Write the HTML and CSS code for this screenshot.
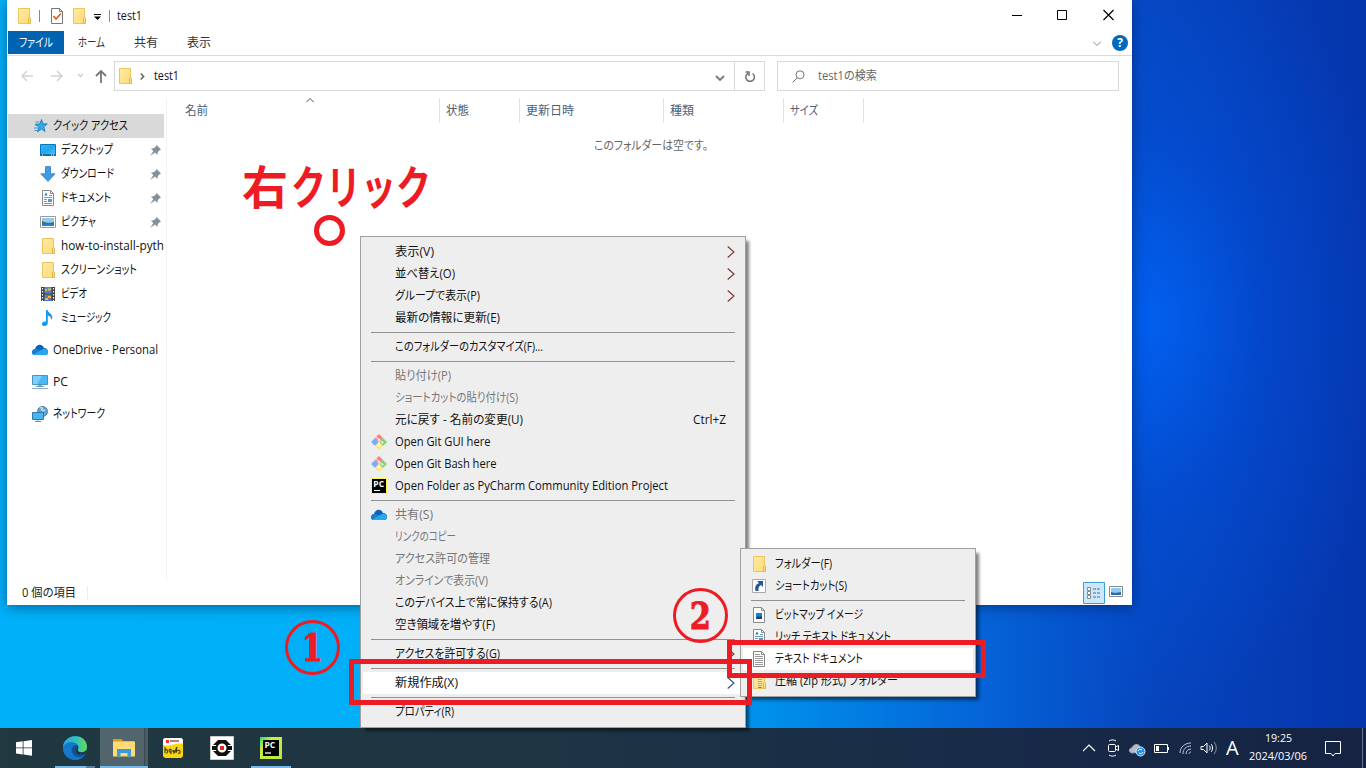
FILE: index.html
```html
<!DOCTYPE html>
<html lang="ja">
<head>
<meta charset="utf-8">
<title>test1</title>
<link rel="stylesheet" href="styles.css">
</head>
<body>
<svg class="defs" aria-hidden="true">
  <defs>
    <linearGradient id="gf" x1="0" y1="0" x2="1" y2="1"><stop offset="0" stop-color="#ffe9a2"/><stop offset="1" stop-color="#ffdc7c"/></linearGradient>
    <linearGradient id="gb" x1="0" y1="0" x2="1" y2="1"><stop offset="0" stop-color="#35b4f5"/><stop offset=".5" stop-color="#25a5ee"/><stop offset="1" stop-color="#55c4ff"/></linearGradient>
    <linearGradient id="ge" x1="0" y1="0" x2="1" y2="0"><stop offset="0" stop-color="#2aa5e0"/><stop offset=".6" stop-color="#32c6b4"/><stop offset="1" stop-color="#66dc4c"/></linearGradient>
    <linearGradient id="gd" x1="0" y1="0" x2="0" y2="1"><stop offset="0" stop-color="#1687d9"/><stop offset="1" stop-color="#0b58a8"/></linearGradient>
    <linearGradient id="gp" x1="0" y1="0" x2="1" y2="1"><stop offset="0" stop-color="#21d789"/><stop offset=".3" stop-color="#c8f03c"/><stop offset="1" stop-color="#b5ea42"/></linearGradient>
    <symbol id="folder" viewBox="0 0 16 16"><path d="M2.500.5h11v15h-11z" fill="url(#gf)" stroke="#eac65c"/><path d="M12.500 15.500v-5.200l1-1 1 1v5.200z" fill="#ffe08a" stroke="#e0b645"/></symbol>
    <symbol id="star" viewBox="0 0 16 16"><path d="M9.500 1.500l1.500 4.300 4.300.1-3.500 2.900 1.200 4.700-3.500-2.400-4 2.700 1.400-4.500L3.500 6.200l4.500-.3z" fill="#34a8ea" stroke="#1379bd" stroke-width=".8"/><path d="M3.500 4h4M2.500 7h3M2 10h4M2.500 12.500h3" stroke="#1f8dd0" stroke-width=".8"/></symbol>
    <symbol id="desktop" viewBox="0 0 16 16"><path d="M.5 2.500h15v11H.500z" fill="url(#gb)" stroke="#0878bc"/><path d="M0 13h16" stroke="#0b67a4" stroke-width="1.500"/><path d="M11 13h1M13 13h1M2 13h1" stroke="#fff"/></symbol>
    <symbol id="down" viewBox="0 0 16 16"><path d="M5.500.5h5v7.300h4.500L8 15.500.8 7.800h4.700z" fill="#419be2" stroke="#2f80c8" stroke-width=".8"/></symbol>
    <symbol id="doc" viewBox="0 0 16 16"><path d="M2.500.5h8l3 3v12h-11z" fill="#fff" stroke="#8a8a8a"/><path d="M10.500.5v3h3" fill="none" stroke="#8a8a8a"/><path d="M4 7.500h8M4 9.500h3M4 11.500h3M4 13.500h8M9 5.500h3" stroke="#6c9cbd"/><path d="M4.300 5.500L6 2.500l1.500 3z" fill="#2676b1"/><path d="M8 9h4v3H8z" fill="#4b9bd0"/></symbol>
    <symbol id="picture" viewBox="0 0 16 16"><path d="M.500 2.500h15v11H.500z" fill="#fff" stroke="#999"/><path d="M2 4h12v8H2z" fill="#8ecaf5"/><path d="M2 7l4 1.500L9 9l5-1v2H2z" fill="#44705d"/><path d="M2 10h12v2H2z" fill="#327dbb"/></symbol>
    <symbol id="video" viewBox="0 0 16 16"><path d="M1 1h14v14H1z" fill="#404040"/><path d="M4.500 1h7v6.500h-7z" fill="#5588ce"/><path d="M4.500 8.500h7V15h-7z" fill="#4d80d0"/><path d="M8 3.500h3M5 4h2M8 11h3M5 13h3" stroke="#e8bd36" stroke-width="2"/><path d="M7 5.500h3M8 12.500h2" stroke="#c94c35"/><path d="M2.500 2v13M13.500 2v13" stroke="#fff" stroke-width="1.200" stroke-dasharray="1.500 1.500"/></symbol>
    <symbol id="music" viewBox="0 0 16 16"><path d="M6 0h1.600c.2 3 5 3.500 4.700 7.500-.1 1.300-.7 2-1.400 2.500.8-2.500-1-4-3.100-4.500V13c0 4-6.400 3.800-5.800.5C2.400 11.800 4.500 11 6 11.600z" fill="#119af0"/></symbol>
    <symbol id="cloud" viewBox="0 0 16 16"><path d="M3 7C4 2 10 .800 12 6c3 0 4 2 4 4 0 2-1 3-3 3H3C1 13 0 12 0 10.500S1 7 3 7z" fill="#0a63b7"/><path d="M3 7c2-.3 4 .4 5 1.500L1 12.500C-.8 11 0 7.500 3 7z" fill="#1580d3"/><path d="M1.200 12.500L8 8.500l4-2c2.500 0 4 1.500 4 3.500 0 2-1 3-3 3H3z" fill="#28a8ea"/></symbol>
    <symbol id="pc" viewBox="0 0 16 16"><path d="M.500 1.500h15v9H.500z" fill="#4ab9fa" stroke="#4f92ba"/><path d="M1 2h9L5 10H1z" fill="#7bd0ff"/><path d="M6 11h4v1.500H6zM4 12h8v1H4z" fill="#6baacb"/><path d="M0 14h16v1H0z" fill="#8eabc0"/></symbol>
    <symbol id="network" viewBox="0 0 16 16"><circle cx="10.500" cy="5.500" r="5" fill="#62a4cf" stroke="#4b86ad"/><path d="M8 2c2-1 3 0 2 1s1 2 3 1" fill="none" stroke="#bddaea" stroke-width="1.500"/><path d="M.500 6.500h11v7H.500z" fill="#47b5f4" stroke="#3179a8"/><path d="M6 14v1M3 15.500h6" stroke="#7296aa"/></symbol>
    <symbol id="pin" viewBox="0 0 10 10"><path d="M6 0l4 4-1.400.700L7 6.500 6.800 9 4.500 6.900.2 9.900 3.100 5.500.8 3.200l2.500-.2L5.200 1.500z" fill="#849099"/></symbol>
    <symbol id="git" viewBox="0 0 16 16"><path d="M8 0l4 4-4 4-4-4z" fill="#ff7d7d"/><path d="M4 4l4 4-4 4-4-4z" fill="#7aaefb"/><path d="M12 4l4 4-4 4-4-4z" fill="#82d36d"/><path d="M8 8l4 4-4 4-4-4z" fill="#ffe681"/><path d="M5 3l7 6M8 5v7" stroke="#f2f2f2"/><circle cx="8" cy="5.500" r="1" fill="#fff"/><circle cx="11.500" cy="8.500" r="1" fill="#fff"/><circle cx="8" cy="11.500" r="1" fill="#fff"/></symbol>
    <symbol id="pycharm" viewBox="0 0 16 16"><path d="M.500.500h15v15H.500z" stroke="#fcf84a"/><text x="2.300" y="8.800" fill="#fff" font-family="Open Sans" font-size="8.500" font-weight="700">PC</text><path d="M3 12.500h6" stroke="#fff"/></symbol>
    <symbol id="shortcut" viewBox="0 0 16 16"><path d="M1.500 1.500h13v13h-13z" fill="#fff" stroke="#aaa"/><path d="M6 3h6v6l-2-2c-2 1-3 3-2.500 6h-3C3.800 10 4 6.500 8 5z" fill="#2a5795"/></symbol>
    <symbol id="bitmap" viewBox="0 0 16 16"><path d="M2.500.5h8l3 3v12h-11z" fill="#fff" stroke="#8a8a8a"/><path d="M10.500.5v3h3" fill="none" stroke="#8a8a8a"/><path d="M5 6h6v6H5z" fill="#1684d6"/><path d="M5 11l2-2 1.500 1L10 9l1 1v2H5z" fill="#1e3f6d"/></symbol>
    <symbol id="text" viewBox="0 0 16 16"><path d="M2.500.5h8l3 3v12h-11z" fill="#fff" stroke="#858585"/><path d="M10.500.5v3h3" fill="none" stroke="#858585"/><path d="M4 3.500h5M4 5.500h8M4 7.500h8M4 9.500h8M4 11.500h8M4 13.500h8" stroke="#999"/></symbol>
    <symbol id="zip" viewBox="0 0 16 16"><use href="#folder"/><path d="M9 0v16" stroke="#686868" stroke-width="3" stroke-dasharray="1 1"/><path d="M9 6v8" stroke="#e7e7e7"/></symbol>
    <symbol id="chev" viewBox="0 0 8 12"><path d="M.7.5L7 6 .7 11.500" fill="none" stroke="currentColor" stroke-width="1.100"/></symbol>
  </defs>
</svg>

<main class="desktop">
  <section class="window">
    <header class="titlebar">
      <svg class="i16"><use href="#folder"/></svg><i class="tick"></i>
      <svg class="i16 check" viewBox="0 0 16 16"><path d="M2.500.5h8l3 3v12h-11z" fill="#fff" stroke="#777"/><path d="M10.500.5v3h3" fill="none" stroke="#777"/><path d="M4.500 8l2.500 3 5-5.500" fill="none" stroke="#e85a25" stroke-width="1.700"/></svg>
      <svg class="i16 second"><use href="#folder"/></svg>
      <svg class="more" viewBox="0 0 7 6"><path d="M0 .5h7" stroke="#000"/><path d="M0 2.500h7L3.500 6z"/></svg><i class="tick"></i>
      <span class="title" data-w="25">test1</span>
      <svg class="controls" viewBox="0 0 102 12"><path d="M0 6.500h10M45.500 1.500h9v9h-9z" fill="none" stroke="#000"/><path d="M91.500 1l10 10M101.500 1l-10 10" fill="none" stroke="#000" stroke-width="1.200"/></svg>
    </header>
    <nav class="ribbon">
      <span class="file"><b data-w="34">ファイル</b></span><span class="tab t1" data-w="27">ホーム</span><span class="tab t2" data-w="24">共有</span><span class="tab t3" data-w="24">表示</span>
      <svg class="rchev" viewBox="0 0 8 5"><path d="M0 .5l4 4 4-4" fill="none" stroke="#888"/></svg>
      <span class="help">?</span>
    </nav>
    <div class="address">
      <svg class="arrows" viewBox="0 0 90 16"><path d="M12 8H1m5-5L1 8l5 5M30 8h11m-5-5l5 5-5 5" fill="none" stroke="#d2d2d2" stroke-width="1.500"/><path d="M57 6l2.500 2.500L62 6" fill="none" stroke="#ccc" stroke-width="1.300"/><path d="M80 15V3m-5 5l5-5 5 5" fill="none" stroke="#777" stroke-width="1.800"/></svg>
      <div class="path"><svg class="i16"><use href="#folder"/></svg><svg class="crumb" viewBox="0 0 5 7"><path d="M.7.5l3 3-3 3" fill="none" stroke="#666" stroke-width="1.500"/></svg><span data-w="25">test1</span>
        <svg class="drop" viewBox="0 0 10 6"><path d="M1 1l4 4 4-4" fill="none" stroke="#777" stroke-width="1.800"/></svg>
        <span class="refresh"><svg viewBox="0 0 12 12"><path d="M8.500 2.500A4.300 4.300 0 1 1 4 2.300M1.500 1H5v4" fill="none" stroke="#707070" stroke-width="1.500"/></svg></span></div>
      <div class="search"><svg viewBox="0 0 13 13"><circle cx="8" cy="4.800" r="4" fill="none" stroke="#777"/><path d="M5 8L.5 12.500" stroke="#777"/></svg><span data-w="59">test1の検索</span></div>
    </div>
    <div class="body">
      <aside class="side">
        <div class="nav top sel"><svg class="i16"><use href="#star"/></svg><span data-w="75">クイック アクセス</span></div>
        <div class="nav"><svg class="i16"><use href="#desktop"/></svg><span data-w="52">デスクトップ</span><svg class="pin"><use href="#pin"/></svg></div>
        <div class="nav"><svg class="i16"><use href="#down"/></svg><span data-w="53">ダウンロード</span><svg class="pin"><use href="#pin"/></svg></div>
        <div class="nav"><svg class="i16"><use href="#doc"/></svg><span data-w="50">ドキュメント</span><svg class="pin"><use href="#pin"/></svg></div>
        <div class="nav"><svg class="i16"><use href="#picture"/></svg><span data-w="35">ピクチャ</span><svg class="pin"><use href="#pin"/></svg></div>
        <div class="nav"><svg class="i16"><use href="#folder"/></svg><span data-w="103">how-to-install-pyth</span></div>
        <div class="nav"><svg class="i16"><use href="#folder"/></svg><span data-w="76">スクリーンショット</span></div>
        <div class="nav"><svg class="i16"><use href="#video"/></svg><span data-w="26">ビデオ</span></div>
        <div class="nav"><svg class="i16"><use href="#music"/></svg><span data-w="50">ミュージック</span></div>
        <div class="nav top gap"><svg class="i16"><use href="#cloud"/></svg><span data-w="105">OneDrive - Personal</span></div>
        <div class="nav top gap"><svg class="i16"><use href="#pc"/></svg><span data-w="15">PC</span></div>
        <div class="nav top gap"><svg class="i16"><use href="#network"/></svg><span data-w="52">ネットワーク</span></div>
      </aside>
      <section class="files">
        <svg class="sort" viewBox="0 0 8 5"><path d="M0 4.500l4-4 4 4" fill="none" stroke="#555"/></svg>
        <div class="cols"><div><span data-w="23">名前</span></div><div><span data-w="23">状態</span></div><div><span data-w="48">更新日時</span></div><div><span data-w="24">種類</span></div><div><span data-w="28">サイズ</span></div></div>
        <p class="empty"><span data-w="114">このフォルダーは空です。</span></p>
      </section>
    </div>
    <footer class="status"><span data-w="54">0 個の項目</span><i></i>
      <svg class="views" viewBox="0 0 43 22"><path d="M.500.500h21v21H.500z" fill="#cbe8fb" stroke="#3a9fca"/><path d="M4.500 5.500h3v3h-3zM4.500 9.500h3v3h-3zM4.500 13.500h3v3h-3z" fill="#fff" stroke="#7f8c94"/><path d="M10 7h3m1 0h3M10 11h3m1 0h3M10 15h3m1 0h3" stroke="#536e80"/><path d="M26.500 4.500h13v10h-13z" fill="#fff" stroke="#888"/><path d="M28 6h10v7H28z" fill="#8fcaf5"/><path d="M28 10l4 1 6-1v3H28z" fill="#2d699e"/></svg>
    </footer>
  </section>

  <div class="redtext"><span data-w="46">右</span><span data-w="140">クリック</span></div>
  <div class="ring"></div>

  <section class="menu main">
    <div class="item"><span data-w="39">表示(V)</span><svg class="sub"><use href="#chev"/></svg></div>
    <div class="item"><span data-w="60">並べ替え(O)</span><svg class="sub"><use href="#chev"/></svg></div>
    <div class="item"><span data-w="85">グループで表示(P)</span><svg class="sub"><use href="#chev"/></svg></div>
    <div class="item"><span data-w="105">最新の情報に更新(E)</span></div>
    <hr>
    <div class="item"><span data-w="148">このフォルダーのカスタマイズ(F)...</span></div>
    <hr>
    <div class="item off"><span data-w="56">貼り付け(P)</span></div>
    <div class="item off"><span data-w="123">ショートカットの貼り付け(S)</span></div>
    <div class="item"><span data-w="128">元に戻す - 名前の変更(U)</span><span class="key" data-w="33">Ctrl+Z</span></div>
    <div class="item"><svg class="i16"><use href="#git"/></svg><span data-w="95.500">Open Git GUI here</span></div>
    <div class="item"><svg class="i16"><use href="#git"/></svg><span data-w="101.500">Open Git Bash here</span></div>
    <div class="item"><svg class="i16"><use href="#pycharm"/></svg><span data-w="273">Open Folder as PyCharm Community Edition Project</span></div>
    <hr>
    <div class="item off"><svg class="i16"><use href="#cloud"/></svg><span data-w="38">共有(S)</span></div>
    <div class="item off"><span data-w="61">リンクのコピー</span></div>
    <div class="item off"><span data-w="95">アクセス許可の管理</span></div>
    <div class="item off"><span data-w="93">オンラインで表示(V)</span></div>
    <div class="item"><span data-w="157">このデバイス上で常に保持する(A)</span></div>
    <div class="item"><span data-w="100">空き領域を増やす(F)</span></div>
    <hr>
    <div class="item"><span data-w="105">アクセスを許可する(G)</span><svg class="sub"><use href="#chev"/></svg></div>
    <hr>
    <div class="item hot"><span data-w="63">新規作成(X)</span><svg class="sub blue"><use href="#chev"/></svg></div>
    <hr>
    <div class="item"><span data-w="59">プロパティ(R)</span></div>
  </section>

  <section class="menu child">
    <div class="item"><svg class="i16"><use href="#folder"/></svg><span data-w="57">フォルダー(F)</span></div>
    <div class="item"><svg class="i16"><use href="#shortcut"/></svg><span data-w="72">ショートカット(S)</span></div>
    <hr>
    <div class="item"><svg class="i16"><use href="#bitmap"/></svg><span data-w="88">ビットマップ イメージ</span></div>
    <div class="item"><svg class="i16"><use href="#doc"/></svg><span data-w="116">リッチ テキスト ドキュメント</span></div>
    <div class="item hot"><svg class="i16"><use href="#text"/></svg><span data-w="88">テキスト ドキュメント</span></div>
    <div class="item"><svg class="i16"><use href="#zip"/></svg><span data-w="123">圧縮 (zip 形式) フォルダー</span></div>
  </section>

  <div class="box one"></div><div class="box two"></div>
  <div class="num n1"><span>1</span></div><div class="num n2"><span>2</span></div>

  <footer class="taskbar">
    <div class="app start"><svg width="16" height="16" viewBox="0 0 16 16"><path d="M0 2.200l6.700-.9v6.200H0zM7.500 1.200L16 0v7.500H7.500zM0 8.300h6.700v6.200L0 13.600zM7.500 8.300H16v7.500l-8.500-1.200z" fill="#fff"/></svg></div>
    <div class="app edge"><svg width="24" height="24" viewBox="0 0 24 24"><circle cx="12" cy="12" r="12" fill="url(#gd)"/><path d="M0 11C1-2 22-4 24 10c.3 5-4 7-7.500 6-3-1-1-2.500-1-5 0-5-10-7-15.500 0z" fill="url(#ge)"/><path d="M0 12C2 5 11 5 13 9c-4 0-6 4-4 8 2 5 8 5 12 3-7 8-21 3-21-8z" fill="#1678cb"/><path d="M14 9c-5 0-6 5-4 8 2.500 4.500 8 4.500 12 1l.5-1C19 18 14 17 15 13z" fill="#164e8d"/><path d="M14.500 9.500c2 2-.5 4 .5 5.500 2 2.500 7 1.500 8.500-1l-1 3.500c-4 2-9 1-9.500-2z" fill="#20343e"/></svg></div>
    <div class="app explorer"><svg width="22" height="20" viewBox="0 0 22 20"><path d="M0 1h8l2 2h11.500v15H0z" fill="#f4b63c"/><path d="M0 4h22v14.500H0z" fill="#ffda75"/><path d="M0 1h8l1.500 2H0z" fill="#e09a13"/><path d="M4 11h14v7.500h-3.500V15h-7v3.500H4z" fill="#379be0"/></svg></div>
    <div class="app lego"><svg width="20" height="20" viewBox="0 0 20 20"><rect width="20" height="20" rx="3" fill="#fbd514"/><path d="M0 7V3a3 3 0 0 1 3-3h14a3 3 0 0 1 3 3v3C14 4 6 9 0 7z" fill="#fff"/><path d="M3 2h3v3H3z" fill="#e33"/><path d="M7 3h9" stroke="#ad4b4b" stroke-width="1.500"/><path d="M2 9v6m0-2c2-5 4 3 1 2m5-4c-3 0-2 4 0 3v-3 5m2-4l1 3 3-6-1 6m1-2c4-3 4 4 1 2m-6-2h5" fill="none" stroke="#443b13" stroke-width="1.100"/></svg></div>
    <div class="app ev3"><svg width="24" height="24" viewBox="0 0 24 24"><path d="M.500.500h23v23H.500z" fill="#fff" stroke="#ccc"/><path d="M8 4h8l5 5H3zM3 15h18l-5 5H8zM2 10h4v4H2zM18 10h4v4h-4z" fill="#111"/><circle cx="12" cy="12" r="5.500" fill="#fff" stroke="#111" stroke-width="2"/><path d="M10 10h4v4h-4z" fill="#ec2525"/></svg></div>
    <div class="app pyc"><svg width="22" height="22" viewBox="0 0 22 22"><path d="M0 0h22v22H0z" fill="url(#gp)"/><path d="M3 3h16v16H3z"/><text x="4.500" y="11" fill="#fff" font-family="Open Sans" font-size="8.500" font-weight="700">PC</text><path d="M5 16h6" stroke="#fff" stroke-width="1.300"/></svg></div>
    <div class="tray">
      <svg width="130" height="24" viewBox="0 0 130 24" fill="none" stroke="#fff"><path d="M0 15l6-6 6 6" stroke-width="1.200"/>
        <rect x="25.500" y="8.500" width="7" height="7" rx="1"/><path d="M32.500 11l3-1.500v5l-3-1.500M26 5c2-1.500 5-1.500 7 0M26 19c2 1.500 5 1.500 7 0"/>
        <path d="M49 17c-4-1-3-5 0-5 1-4 7-5 8-1 3 0 4 3 2 5z" fill="#b7bbc4" stroke="#9da5b0"/><circle cx="57.500" cy="15.500" r="4.500" fill="#218be1" stroke="#d7efff"/><path d="M55 15a2.500 2.500 0 0 1 4-1m1 2a2.500 2.500 0 0 1-4 1"/>
        <path d="M71.500 8.500h13v8h-13zM85.500 11v3"/><path d="M73 10h3v5h-3z" fill="#fff" stroke="none"/>
        <path d="M97 17C97 11 102 7 108 7M100 18c0-5 3-8 8-8M103 18c0-3 2-5 5-5M106 18c0-1 1-2 2-2" stroke="#bfc6d4"/>
        <path d="M118 10.500h2.500L124 7v10l-3.500-3.500H118zM126 9.500c1.500 1 1.500 4 0 5"/></svg>
      <svg class="waves" width="8" height="14" viewBox="0 0 8 14" fill="none" stroke="#fff"><path d="M0 3c2 2 2 6 0 8"/><path d="M3 1c3 3 3 9 0 12" stroke="#8b93a2"/></svg>
      <span class="ime">A</span>
      <div class="clock"><span data-w="27">19:25</span><span data-w="58">2024/03/06</span></div>
      <svg class="note" width="16" height="16" viewBox="0 0 16 16"><path d="M.500.500h15v12H10L8 15l-2-2.500H.500z" fill="none" stroke="#fff"/></svg>
      <i class="peek"></i>
    </div>
  </footer>
</main>
<script src="fit.js"></script>
</body>
</html>
```
FILE: styles.css
```css
* { box-sizing: border-box; }
body { margin: 0; width: 1366px; height: 768px; overflow: hidden; font: 12px/16px "Open Sans", "Noto Sans CJK JP", sans-serif; font-feature-settings: "palt"; color: #111; }
.defs { position: absolute; width: 0; height: 0; }
svg { display: block; flex: none; }
.i16 { width: 16px; height: 16px; }
[data-w] { display: inline-block; white-space: nowrap; transform-origin: 0 50%; flex: none; }
.desktop { position: relative; width: 1366px; height: 768px; display: flex; flex-direction: column; justify-content: space-between;
  background: radial-gradient(ellipse 250px 400px at 1150px 320px, rgba(0,104,255,.75), rgba(0,90,240,.35) 45%, rgba(0,70,220,0) 100%),
    linear-gradient(90deg, #00b1f9 0, #00aff8 380px, #0091ec 760px, #0564d8 980px, #0645bd 1150px, #0535ad 1366px); }

.window { width: 1125px; height: 605px; margin-left: 7px; background: #fff; display: flex; flex-direction: column; box-shadow: 0 2px 12px rgba(0,20,60,.5); }
.titlebar { height: 31px; display: flex; align-items: center; padding-left: 9px; }
.tick { width: 1px; height: 12px; background: #888; margin-left: 7px; }
.titlebar .i16 { margin-top: 1px; }
.check { margin-left: 9px; }
.second { margin-left: 6px; }
.more { width: 7px; height: 6px; margin: 3px 0 0 7px; }
.more + .tick { margin-left: 8px; }
.title { margin-left: 7px; margin-top: 1px; }
.controls { width: 102px; height: 12px; margin-left: auto; margin-right: 18px; margin-top: -1px; }
.ribbon { height: 25px; border-bottom: 1px solid #dadbdc; display: flex; align-items: flex-start; padding-left: 1px; color: #333; }
.file { background: #0063b1; color: #fff; width: 56px; height: 23px; padding: 4px 0 0 11px; }
.file b { font-weight: 400; }
.tab { margin-top: 4px; }
.t1 { margin-left: 14px; }
.t2 { margin-left: 29px; }
.t3 { margin-left: 29px; }
.rchev { width: 8px; height: 5px; margin: 10px 11px 0 auto; }
.help { width: 16px; height: 16px; margin: 4px 4px 0 0; border-radius: 50%; background: #0068be; color: #fff; font-weight: 700; text-align: center; line-height: 16px; }
.address { height: 40px; padding-top: 5px; display: flex; }
.arrows { width: 90px; height: 16px; margin: 7px 3px 0 14px; }
.path, .search { height: 30px; border: 1px solid #d9d9d9; display: flex; align-items: center; }
.path { width: 651px; padding-left: 2px; }
.crumb { width: 5px; height: 7px; margin: 0 9px 0 7px; }
.drop { width: 10px; height: 6px; margin-left: auto; margin-right: 9px; margin-top: 3px; }
.refresh { width: 30px; height: 28px; border-left: 1px solid #d9d9d9; display: grid; place-items: center; }
.refresh svg { width: 12px; height: 12px; margin-top: 2px; }
.search { width: 342px; margin-left: 12px; color: #666; }
.search svg { width: 13px; height: 13px; margin: 0 13px 0 14px; }
.body { flex: 1; display: flex; min-height: 0; }
.side { width: 160px; border-right: 1px solid #f3f3f3; margin-top: 2px; padding-top: 16px; }
.nav { height: 24px; margin-left: 1px; width: 156px; display: flex; align-items: center; padding-left: 32px; overflow: hidden; }
.nav span { margin-left: 5px; }
.nav.top { padding-left: 24px; }
.sel { background: #d9d9d9; }
.nav.gap { margin-top: 8px; }
.pin { width: 11px; height: 11px; margin-left: auto; margin-right: 3px; }
.files { flex: 1; display: flex; flex-direction: column; }
.sort { width: 8px; height: 5px; margin: 2px 0 -7px 139px; }
.cols { display: grid; grid-template-columns: 273px 80px 144px 120px 80px; height: 25px; margin-top: 2px; color: #4c607a; }
.cols div { border-right: 1px solid #e2e2e2; padding: 5px 0 0 6px; }
.cols div:first-child { padding-left: 18px; }
.empty { margin: 15px 0 0 427px; color: #666; }
.status { height: 25px; display: flex; align-items: center; padding-left: 15px; color: #222; }
.status i { width: 1px; height: 14px; background: #eee; margin-left: 11px; }
.views { width: 43px; height: 22px; margin-left: auto; margin-right: 6px; }

.redtext { position: absolute; left: 242px; top: 154px; display: flex; gap: 3px; font: 700 46px/60px "Noto Sans CJK JP", sans-serif; color: #ed1c24; }
.ring { position: absolute; left: 314px; top: 215px; width: 31px; height: 31px; border: 5px solid #ed1c24; border-radius: 50%; }

.menu { position: absolute; background: #eee; border: 1px solid #a0a0a0; padding: 4px 2px; box-shadow: 4px 4px 3px -1px rgba(0,0,0,.5); }
.main { left: 360px; top: 236px; width: 386px; height: 492px; }
.child { left: 740px; top: 548px; width: 236px; height: 149px; }
.menu hr { height: 1px; border: 0; background: #919191; margin: 3px 8px; }
.item { height: 22px; display: flex; align-items: center; padding-left: 32px; }
.item .i16 { margin: 0 8px 0 -24px; }
.off { color: #777; }
.hot { background: #fff; }
.sub { width: 8px; height: 12px; margin-left: auto; margin-right: 8px; color: #803030; }
.sub.blue { color: #26507e; }
.key { margin-left: auto; margin-right: 17px; }

.box { position: absolute; border: 5px solid #ed1c24; }
.one { left: 349px; top: 659px; width: 403px; height: 46px; }
.two { left: 727px; top: 640px; width: 259px; height: 38px; }
.num { position: absolute; width: 55px; height: 55px; border: 3px solid #ed1c24; border-radius: 50%; display: grid; place-items: center; color: #ed1c24; font: 700 38px/49px "DejaVu Serif", serif; }
.num span { transform: scaleX(.8); -webkit-text-stroke: 1px #ed1c24; }
.n1 { left: 285px; top: 620px; }
.n2 { left: 673px; top: 588px; }

.taskbar { height: 40px; background: linear-gradient(90deg, #203840, #1e3544 40%, #172a48 75%, #162343); display: flex; color: #fff; }
.app { height: 40px; display: grid; place-items: center; }
.start { width: 48px; }
.edge { width: 40px; margin-left: 7px; background: linear-gradient(90deg, #76b9ed 31px, #51809f 31px) bottom / 100% 2px no-repeat; }
.explorer { width: 48px; margin-left: 5px; background: linear-gradient(#76b9ed, #76b9ed) bottom / 100% 2px no-repeat, linear-gradient(90deg, #52656c 44px, #39494f 44px 45px, #4a5c64 45px); }
.lego { width: 20px; margin-left: 15px; }
.ev3 { width: 24px; margin-left: 27px; }
.pyc { width: 40px; margin-left: 17px; border-bottom: 2px solid #76b9ed; padding-top: 2px; }
.tray { display: flex; align-items: center; margin-left: auto; }
.waves { margin-left: -2px; }
.ime { font: 20px/24px "Open Sans", sans-serif; margin-left: 7px; width: 14px; }
.clock { width: 58px; height: 38px; margin: 0 18px 0 9px; display: flex; flex-direction: column; align-items: center; font-size: 11.500px; line-height: 18px; }
.note { margin-top: 1px; }
.peek { width: 1px; height: 40px; background: #68718a; margin: 0 3px 0 21px; }
```
FILE: fit.js
```js
// Condense or widen each label horizontally to its intended width.
document.fonts.ready.then(function () {
  document.querySelectorAll('[data-w]').forEach(function (el) {
    var target = Number(el.dataset.w);
    var natural = el.getBoundingClientRect().width;
    el.style.width = target + 'px';
    el.style.transform = 'scaleX(' + (target / natural).toFixed(4) + ')';
  });
});
```
